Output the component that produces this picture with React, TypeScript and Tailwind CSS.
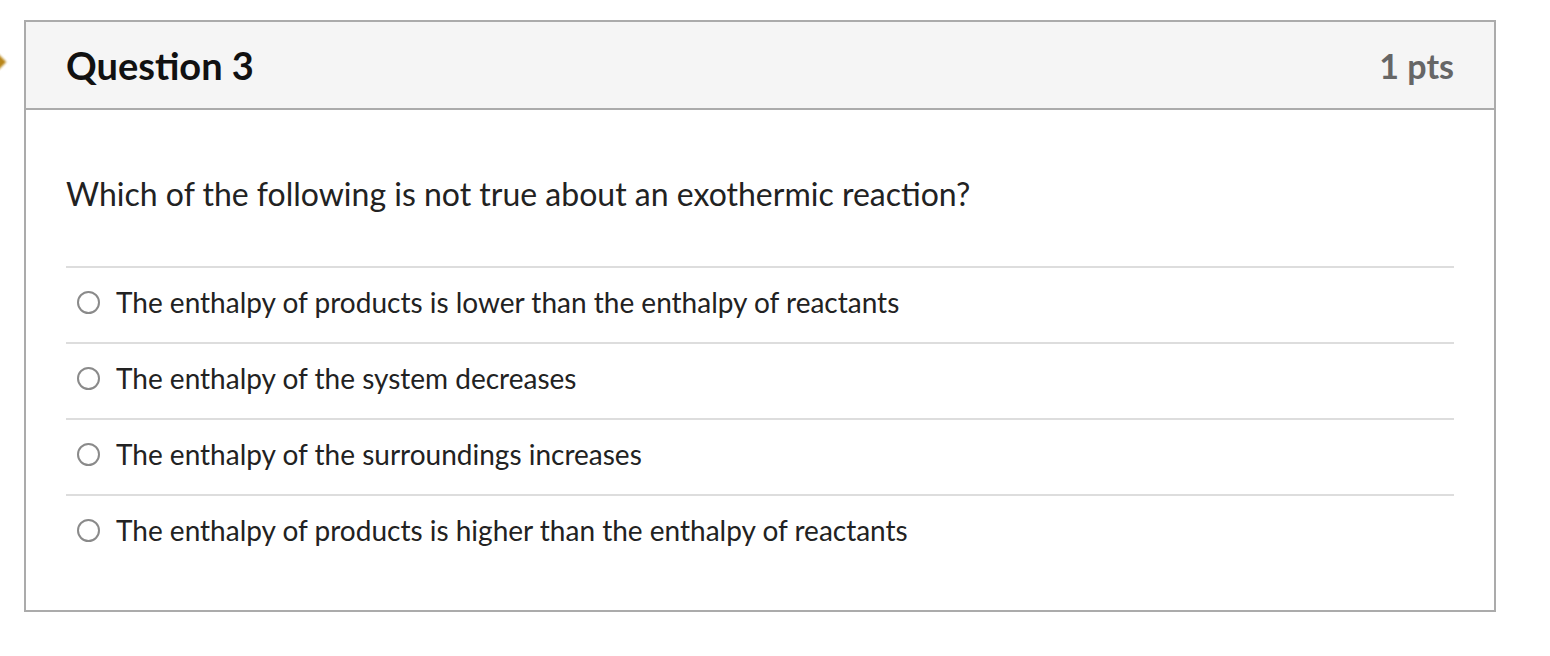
export default function App() {
  const answers = [
    "The enthalpy of products is lower than the enthalpy of reactants",
    "The enthalpy of the system decreases",
    "The enthalpy of the surroundings increases",
    "The enthalpy of products is higher than the enthalpy of reactants",
  ];

  return (
    <div className="relative min-h-[656px] w-[1550px] overflow-hidden bg-white font-['Lato','Liberation_Sans',sans-serif] text-[#222]">
      {/* flag marker peeking in from the left */}
      <div className="absolute left-[-13px] top-[54px] h-[16px] w-[16px] rotate-45 bg-[#b8861a] blur-[1px]" />

      <div className="ml-[24px] pt-[20px]">
        <div className="w-[1472px] border-2 border-[#ababab]">
          <div className="flex h-[88px] items-center justify-between border-b-2 border-[#ababab] bg-[#f5f5f5] px-10">
            <h2 className="text-[38px] font-bold text-[#111]">Question 3</h2>
            <span className="text-[34px] font-bold text-[#666]">1 pts</span>
          </div>

          <div className="px-10 pb-10 pt-[62px]">
            <p className="text-[32px] leading-[44px]">
              Which of the following is not true about an exothermic reaction?
            </p>

            <div className="mt-[50px]">
              {answers.map((a) => (
                <label
                  key={a}
                  className="flex h-[76px] items-center gap-[16px] border-t-2 border-[#ddd] pb-[6px] pl-[11px]"
                >
                  <span className="h-[23px] w-[23px] shrink-0 rounded-full border-2 border-[#8a8a8a] bg-white" />
                  <span className="text-[28px] leading-[34px]">{a}</span>
                </label>
              ))}
            </div>
          </div>
        </div>
      </div>
    </div>
  );
}
